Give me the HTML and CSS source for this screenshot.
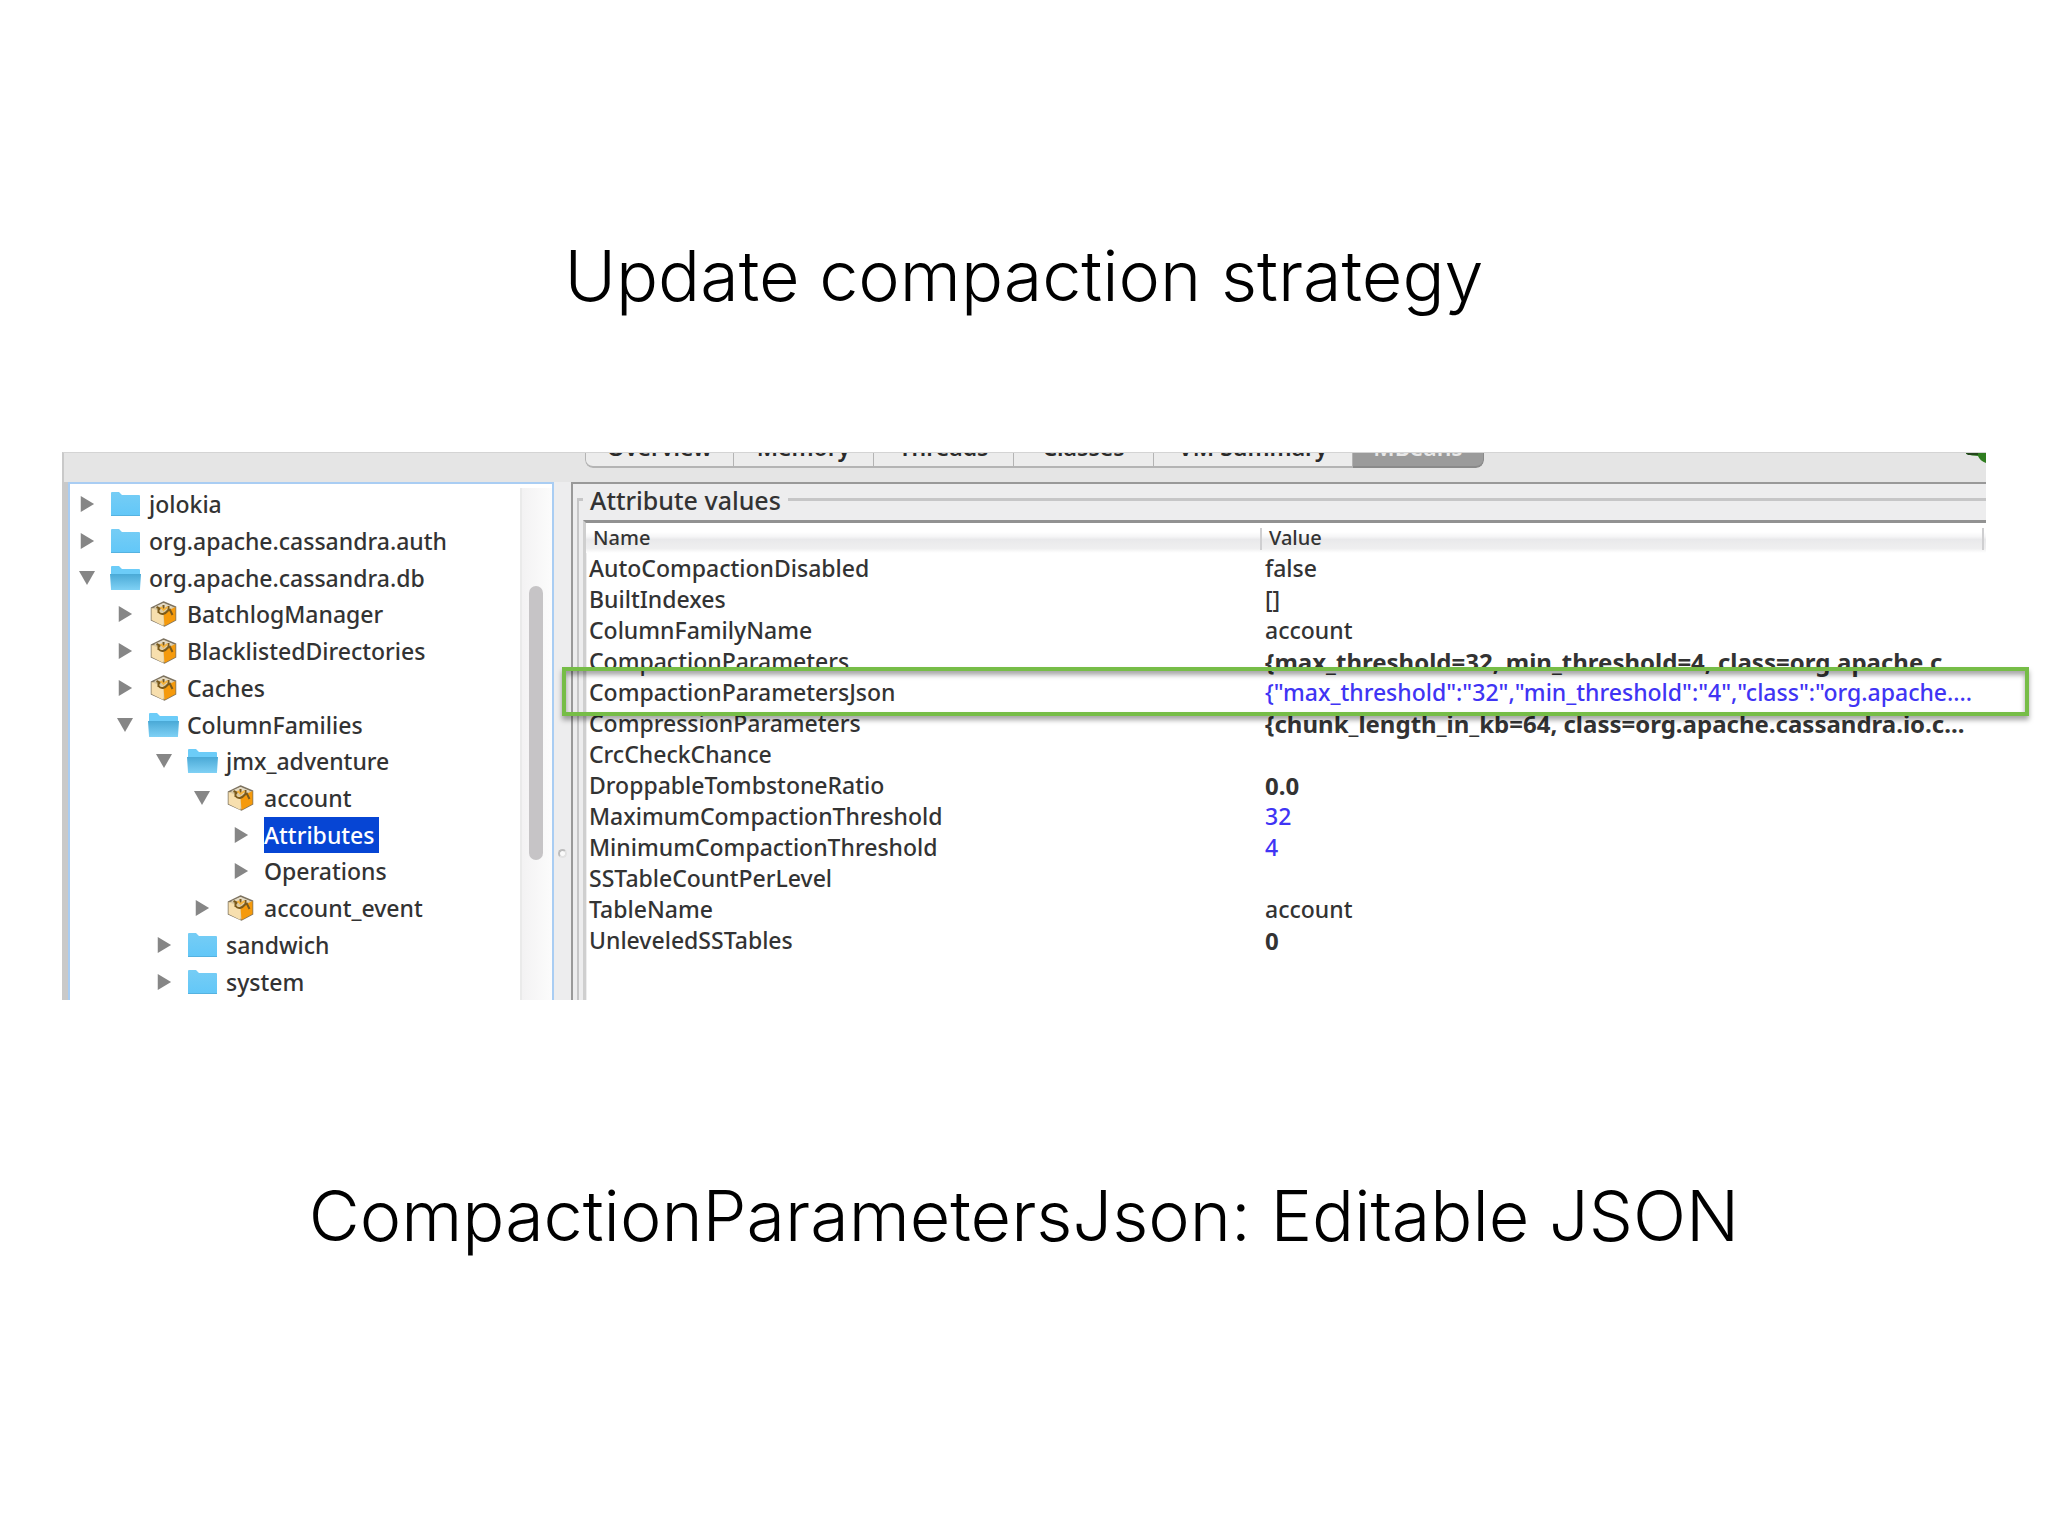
FILE: index.html
```html
<!DOCTYPE html>
<html lang="en">
<head>
<meta charset="utf-8">
<title>Update compaction strategy</title>
<link rel="stylesheet" href="styles.css">
</head>
<body>
<svg class="defs" aria-hidden="true">
  <defs>
    <linearGradient id="sky" x1="0" y1="0" x2="0" y2="1">
      <stop offset="0" stop-color="#76cdf5"/><stop offset="1" stop-color="#62c7f8"/>
    </linearGradient>
    <linearGradient id="skyopen" x1="0" y1="0" x2="0" y2="1">
      <stop offset="0" stop-color="#4aa9d6"/><stop offset="1" stop-color="#7fd1f5"/>
    </linearGradient>
    <symbol id="folder" viewBox="0 0 31 26">
      <path d="M1 2Q1 1 2 1H9L12 4H29Q30 4 30 5V24Q30 25 29 25H2Q1 25 1 24Z" fill="url(#sky)"/>
      <path d="M1 24.500H30" stroke="#55b2e0"/>
    </symbol>
    <symbol id="folder-open" viewBox="0 0 31 26">
      <path d="M1 2Q1 1 2 1H9L12 4H29Q30 4 30 5V24Q30 25 29 25H2Q1 25 1 24Z" fill="#6cccf8"/>
      <path d="M0 9H31L30 24Q30 25 29 25H2Q1 25 1 24Z" fill="url(#skyopen)"/>
    </symbol>
    <symbol id="bean" viewBox="0 0 28 26">
      <path d="M14 1L26 6V19L15 25L2 19V7Z" fill="#d9c9a3" stroke="#7d7361" stroke-width="1.500"/>
      <path d="M2 7L14 12V25L2 19Z" fill="#f7dfae"/>
      <path d="M14 12L26 6V19L15 25Z" fill="#f59a0c"/>
      <path d="M5 6L14 2L23 6L14 10Z" fill="#e2d9c4"/>
      <path d="M7 6L11 8M9 11Q13 16 19 9M9 8V12M14 4V8M19 5V10M20 8L23 14" fill="none" stroke="#7a5a1c" stroke-width="2"/>
      <path d="M11 6L14 9L18 6" fill="none" stroke="#f5b33c" stroke-width="2"/>
    </symbol>
    <symbol id="closed" viewBox="0 0 18 18"><path d="M2 0L17 9L2 18Z" fill="#868686"/></symbol>
    <symbol id="opened" viewBox="0 0 18 18"><path d="M0 1H18L9 17Z" fill="#868686"/></symbol>
  </defs>
</svg>

<main class="slide">
  <h1 class="title">Update compaction strategy</h1>

  <section class="window">
    <header class="topbar">
      <div class="tabs" role="tablist">
        <button class="tab" role="tab">Overview</button>
        <button class="tab" role="tab">Memory</button>
        <button class="tab" role="tab">Threads</button>
        <button class="tab" role="tab">Classes</button>
        <button class="tab tab-wide" role="tab">VM Summary</button>
        <button class="tab tab-on" role="tab" aria-selected="true">MBeans</button>
      </div>
      <svg class="plug" viewBox="0 0 20 10" aria-hidden="true"><path d="M0 0H20V10Q14 8 12 3Q6 3 0 1Z" fill="#2f7d20"/><path d="M0 0H12V2H2Z" fill="#24461c"/></svg>
    </header>

    <div class="panes">
      <nav class="tree" aria-label="MBeans">
        <ul class="nodes">
          <li class="node"><svg class="arrow"><use href="#closed"/></svg><svg class="icon"><use href="#folder"/></svg><span class="label">jolokia</span></li>
          <li class="node"><svg class="arrow"><use href="#closed"/></svg><svg class="icon"><use href="#folder"/></svg><span class="label">org.apache.cassandra.auth</span></li>
          <li class="node"><svg class="arrow"><use href="#opened"/></svg><svg class="icon"><use href="#folder-open"/></svg><span class="label">org.apache.cassandra.db</span></li>
          <li class="node level-1"><svg class="arrow"><use href="#closed"/></svg><svg class="icon"><use href="#bean"/></svg><span class="label">BatchlogManager</span></li>
          <li class="node level-1"><svg class="arrow"><use href="#closed"/></svg><svg class="icon"><use href="#bean"/></svg><span class="label">BlacklistedDirectories</span></li>
          <li class="node level-1"><svg class="arrow"><use href="#closed"/></svg><svg class="icon"><use href="#bean"/></svg><span class="label">Caches</span></li>
          <li class="node level-1"><svg class="arrow"><use href="#opened"/></svg><svg class="icon"><use href="#folder-open"/></svg><span class="label">ColumnFamilies</span></li>
          <li class="node level-2"><svg class="arrow"><use href="#opened"/></svg><svg class="icon"><use href="#folder-open"/></svg><span class="label">jmx_adventure</span></li>
          <li class="node level-3"><svg class="arrow"><use href="#opened"/></svg><svg class="icon"><use href="#bean"/></svg><span class="label">account</span></li>
          <li class="node level-4"><svg class="arrow"><use href="#closed"/></svg><span class="label selected">Attributes</span></li>
          <li class="node level-4"><svg class="arrow"><use href="#closed"/></svg><span class="label">Operations</span></li>
          <li class="node level-3"><svg class="arrow"><use href="#closed"/></svg><svg class="icon"><use href="#bean"/></svg><span class="label">account_event</span></li>
          <li class="node level-2"><svg class="arrow"><use href="#closed"/></svg><svg class="icon"><use href="#folder"/></svg><span class="label">sandwich</span></li>
          <li class="node level-2"><svg class="arrow"><use href="#closed"/></svg><svg class="icon"><use href="#folder"/></svg><span class="label">system</span></li>
        </ul>
        <div class="track"><div class="thumb"></div></div>
      </nav>

      <div class="divider"><span class="grip"></span></div>

      <div class="details">
        <fieldset class="group">
          <legend class="legend">Attribute values</legend>
          <table class="attributes">
            <thead><tr><th>Name</th><th>Value</th></tr></thead>
            <tbody>
              <tr><td>AutoCompactionDisabled</td><td>false</td></tr>
              <tr><td>BuiltIndexes</td><td>[]</td></tr>
              <tr><td>ColumnFamilyName</td><td>account</td></tr>
              <tr><td>CompactionParameters</td><td class="strong">{max_threshold=32, min_threshold=4, class=org.apache.c...</td></tr>
              <tr><td>CompactionParametersJson</td><td class="editable">{"max_threshold":"32","min_threshold":"4","class":"org.apache....</td></tr>
              <tr><td>CompressionParameters</td><td class="strong">{chunk_length_in_kb=64, class=org.apache.cassandra.io.c...</td></tr>
              <tr><td>CrcCheckChance</td><td></td></tr>
              <tr><td>DroppableTombstoneRatio</td><td class="strong">0.0</td></tr>
              <tr><td>MaximumCompactionThreshold</td><td class="editable">32</td></tr>
              <tr><td>MinimumCompactionThreshold</td><td class="editable">4</td></tr>
              <tr><td>SSTableCountPerLevel</td><td></td></tr>
              <tr><td>TableName</td><td>account</td></tr>
              <tr><td>UnleveledSSTables</td><td class="strong">0</td></tr>
            </tbody>
          </table>
        </fieldset>
        <div class="highlight"></div>
      </div>
    </div>
  </section>

  <p class="caption">CompactionParametersJson: Editable JSON</p>
</main>
</body>
</html>
```
FILE: styles.css
```css
* { box-sizing: border-box; }

body {
  margin: 0;
  background: #fff;
  color: #000;
}

.defs { position: absolute; width: 0; height: 0; }

.slide {
  display: flex;
  flex-direction: column;
  min-height: 100vh;
  padding: 232px 62px 0;
}

.title,
.caption {
  margin: 0;
  font: 300 70px/88px Inter, "Liberation Sans", sans-serif;
  text-align: center;
}

.window {
  margin: 132px 0 172px;
  font: 500 23px/30px "Noto Sans", "Open Sans", sans-serif;
  color: #333;
}

.topbar {
  display: flex;
  justify-content: space-between;
  height: 30px;
  padding-left: 521px;
  background: #e5e5e5;
  border-top: 1px solid #d4d4d4;
  border-left: 2px solid #c9c9c9;
}

.tabs {
  display: flex;
  align-items: flex-end;
  height: 15px;
  overflow: hidden;
  border-radius: 0 0 8px 8px;
}

.tab {
  flex: none;
  width: 140px;
  height: 36px;
  padding: 0 0 4px;
  border: 0 solid #b4b4b4;
  border-width: 0 1px 2px;
  background: #ececec;
  color: #2a2a2a;
  font: 600 23px/28px "Noto Sans", "Open Sans", sans-serif;
}

.tab + .tab { border-left: 0; }
.tab:first-child { width: 149px; border-bottom-left-radius: 8px; }
.tab-wide { width: 199px; }

.tab-on {
  width: 131px;
  border-color: #8a8a8a;
  border-bottom-right-radius: 8px;
  background: #9b9b9b;
  color: #e8e8e8;
}

.plug { width: 20px; height: 10px; }

.panes {
  display: grid;
  grid-template-columns: 492px 17px 1fr;
  height: 518px;
  background: linear-gradient(90deg, #c9c9c9 6px, transparent 6px);
}

.tree {
  display: flex;
  margin-left: 6px;
  border: 2px solid #a9cdf3;
  border-bottom: 0;
  background: #fff;
}

.nodes {
  flex: 1;
  display: grid;
  grid-auto-rows: 1fr;
  margin: 0;
  padding: 2px 0 0 9px;
  list-style: none;
}

.node { display: flex; align-items: center; }
.level-1 { padding-left: 38px; }
.level-2 { padding-left: 77px; }
.level-3 { padding-left: 115px; }
.level-4 { padding-left: 154px; }

.arrow { width: 16px; height: 16px; margin-right: 15px; }
.icon { width: 31px; height: 26px; margin-right: 8px; }

.label { line-height: 36px; white-space: nowrap; }
.selected { padding-right: 4px; background: #0645d4; color: #fff; }

.track {
  width: 32px;
  margin-top: 4px;
  padding: 98px 9px 0 7px;
  border-left: 2px solid #eaeaea;
  background: linear-gradient(90deg, #f3f2f3, #fcfcfc);
}

.thumb { height: 274px; border-radius: 8px; background: #c6c4c6; }

.divider {
  display: flex;
  align-items: center;
  justify-content: center;
  padding-top: 224px;
  background: #ededee;
}

.grip {
  flex: none;
  width: 9px;
  height: 9px;
  border: 2px solid #bdbdbd;
  border-right-color: #e2e2e2;
  border-bottom-color: #e2e2e2;
  border-radius: 50%;
  background: #fafafa;
}

.details {
  position: relative;
  display: flex;
  min-width: 0;
  border-top: 2px solid #999;
  border-left: 2px solid #999;
  background: linear-gradient(#ededee 38px, transparent 38px), linear-gradient(90deg, #ededee 14px, #fff 14px);
}

.group {
  flex: 1;
  min-width: 0;
  margin: 0 0 0 4px;
  padding: 6px 0 0 4px;
  border: 0 solid #c6c6c7;
  border-width: 3px 0 0 2px;
}

.legend {
  padding: 2px 7px 0;
  color: #333;
  font-size: 25px;
  line-height: 28px;
}

.attributes {
  display: block;
  height: 480px;
  border-top: 3px solid #929292;
  border-left: 3px solid #cfcfcf;
}

.attributes thead,
.attributes tbody { display: block; }

.attributes tr {
  display: grid;
  grid-template-columns: 676px 1fr;
}

.attributes td,
.attributes th {
  overflow: hidden;
  padding: 0 0 0 3px;
  line-height: 31px;
  text-align: left;
  white-space: nowrap;
}

.attributes th {
  height: 22px;
  padding-left: 7px;
  border-right: 2px solid #cfcfd1;
  font-size: 20px;
  font-weight: 500;
  line-height: 20px;
}

.attributes thead {
  padding: 5px 2px 3px 0;
  background: linear-gradient(#fff 30%, #f6f6f7 45%, #e9e9eb 55%, #efeff0 85%, #fff);
}

.attributes .strong { font-size: 24px; font-weight: 700; }
.attributes .editable { color: #4034f4; }

.highlight {
  position: absolute;
  top: 183px;
  right: -43px;
  left: -11px;
  height: 49px;
  border: 4px solid #76bd47;
  box-shadow: 0 4px 5px rgba(0, 0, 0, .35), inset 0 4px 5px rgba(0, 0, 0, .35);
}
```
